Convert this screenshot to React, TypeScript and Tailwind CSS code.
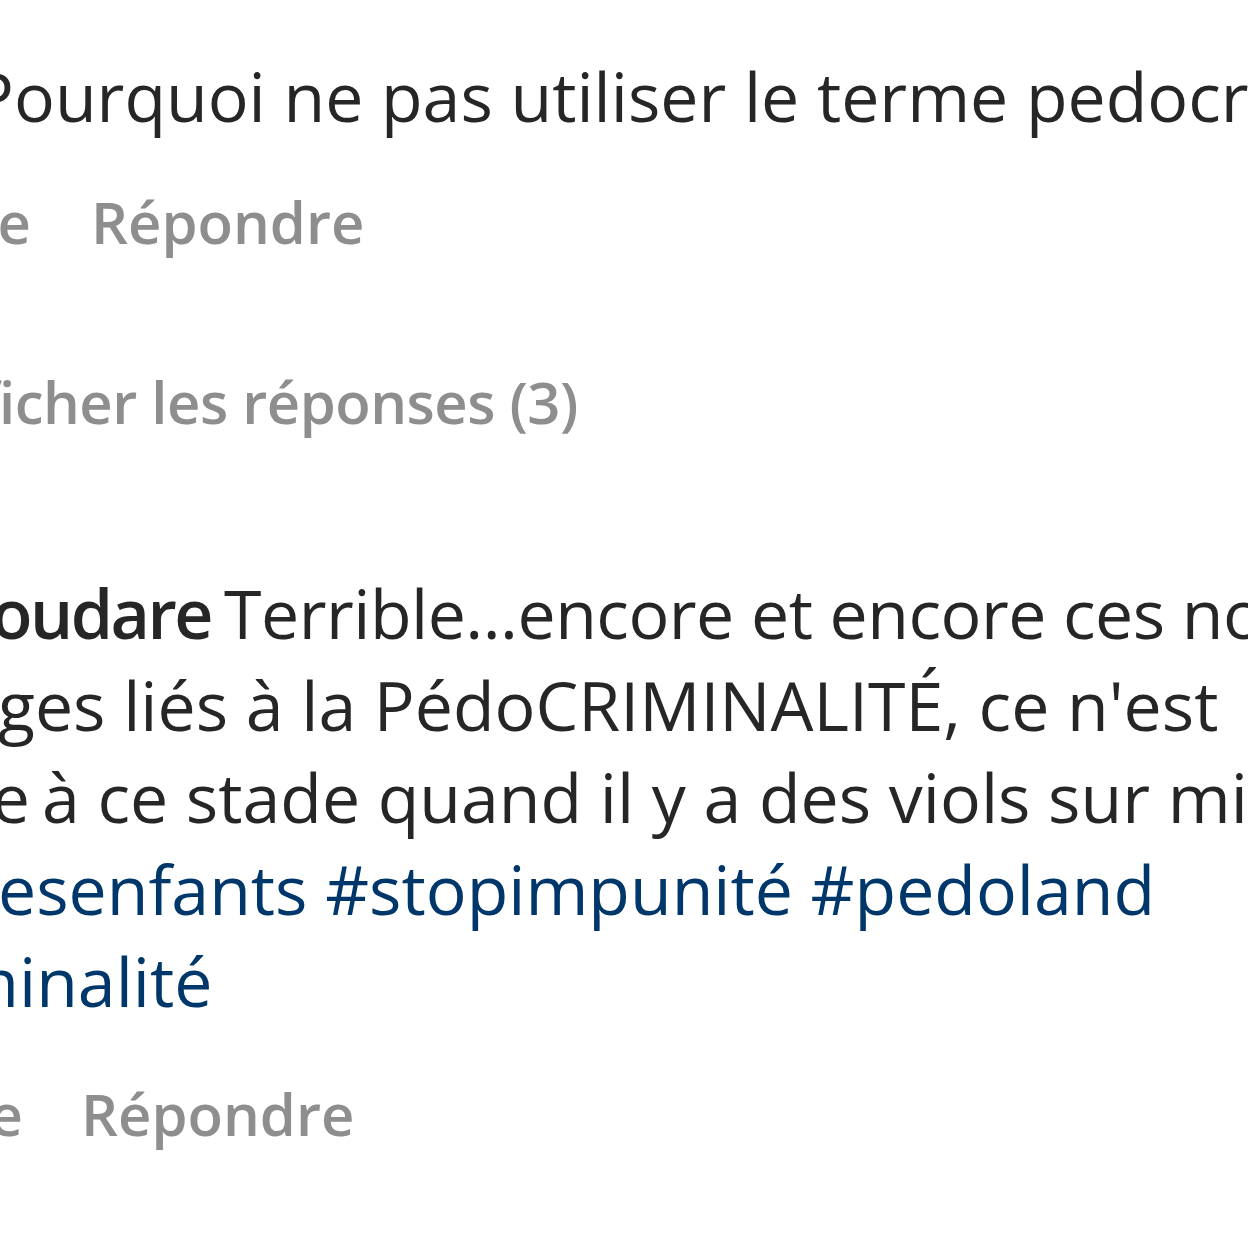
import React from "react";

const font = { fontFamily: '"Open Sans", "Noto Sans", sans-serif' };

// a line whose start is cut by the left edge: the prefix sits in a right-aligned box
// so the visible text begins exactly where the screenshot has it
const Cut = ({
  prefix,
  edge,
  className,
  children,
}: {
  prefix: React.ReactNode;
  edge: string;
  className?: string;
  children: React.ReactNode;
}) => (
  <div className={"flex whitespace-nowrap " + (className ?? "")}>
    <span className={"shrink-0 text-right -ml-[600px] " + edge}>{prefix}</span>
    {children}
  </div>
);

export default function App() {
  return (
    <div
      className="w-[1248px] h-[1248px] overflow-hidden bg-white pt-[50px] text-[#262626]"
      style={font}
    >
      {/* first comment */}
      <Cut prefix="P" edge="w-[614px]" className="text-[68px] leading-[92px]">
        <span>ourquoi ne pas utiliser le terme pedocriminalité ?</span>
      </Cut>

      <Cut
        prefix="3 sem J'aime"
        edge="w-[631px]"
        className="mt-[41px] text-[58px] leading-[78px] font-semibold text-[#8e8e8e]"
      >
        <span className="ml-[60px]">Répondre</span>
      </Cut>

      <Cut
        prefix="—— Aff"
        edge="w-[599px]"
        className="mt-[102px] text-[58px] leading-[78px] font-semibold text-[#8e8e8e]"
      >
        <span className="tracking-[-0.5px]">icher les réponses (3)</span>
      </Cut>

      {/* second comment */}
      <div className="mt-[126px] text-[68px] leading-[92px]">
        <Cut prefix={<b className="font-semibold">b</b>} edge="w-[591px]">
          <span className="font-semibold tracking-[-2.5px]">oudare</span>
          <span className="pl-[13px] tracking-[-0.5px]">Terrible...encore et encore ces noms</span>
        </Cut>
        <Cut prefix="témoigna" edge="w-[598px]">
          <span>ges liés à la PédoCRIMINALITÉ, ce n'est</span>
        </Cut>
        <Cut prefix="grave" edge="w-[630px]">
          <span className="pl-[12px]">à ce stade quand il y a des viols sur mineurs</span>
        </Cut>
        <Cut prefix="#protégeonsl" edge="w-[598px]" className="text-[#00376b]">
          <span>esenfants #stopimpunité #pedoland</span>
        </Cut>
        <Cut prefix="#pedocrim" edge="w-[619px]" className="text-[#00376b]">
          <span>inalité</span>
        </Cut>
      </div>

      <Cut
        prefix="1 sem J'aime"
        edge="w-[623px]"
        className="mt-[48px] text-[58px] leading-[78px] font-semibold text-[#8e8e8e]"
      >
        <span className="ml-[58px]">Répondre</span>
      </Cut>
    </div>
  );
}
